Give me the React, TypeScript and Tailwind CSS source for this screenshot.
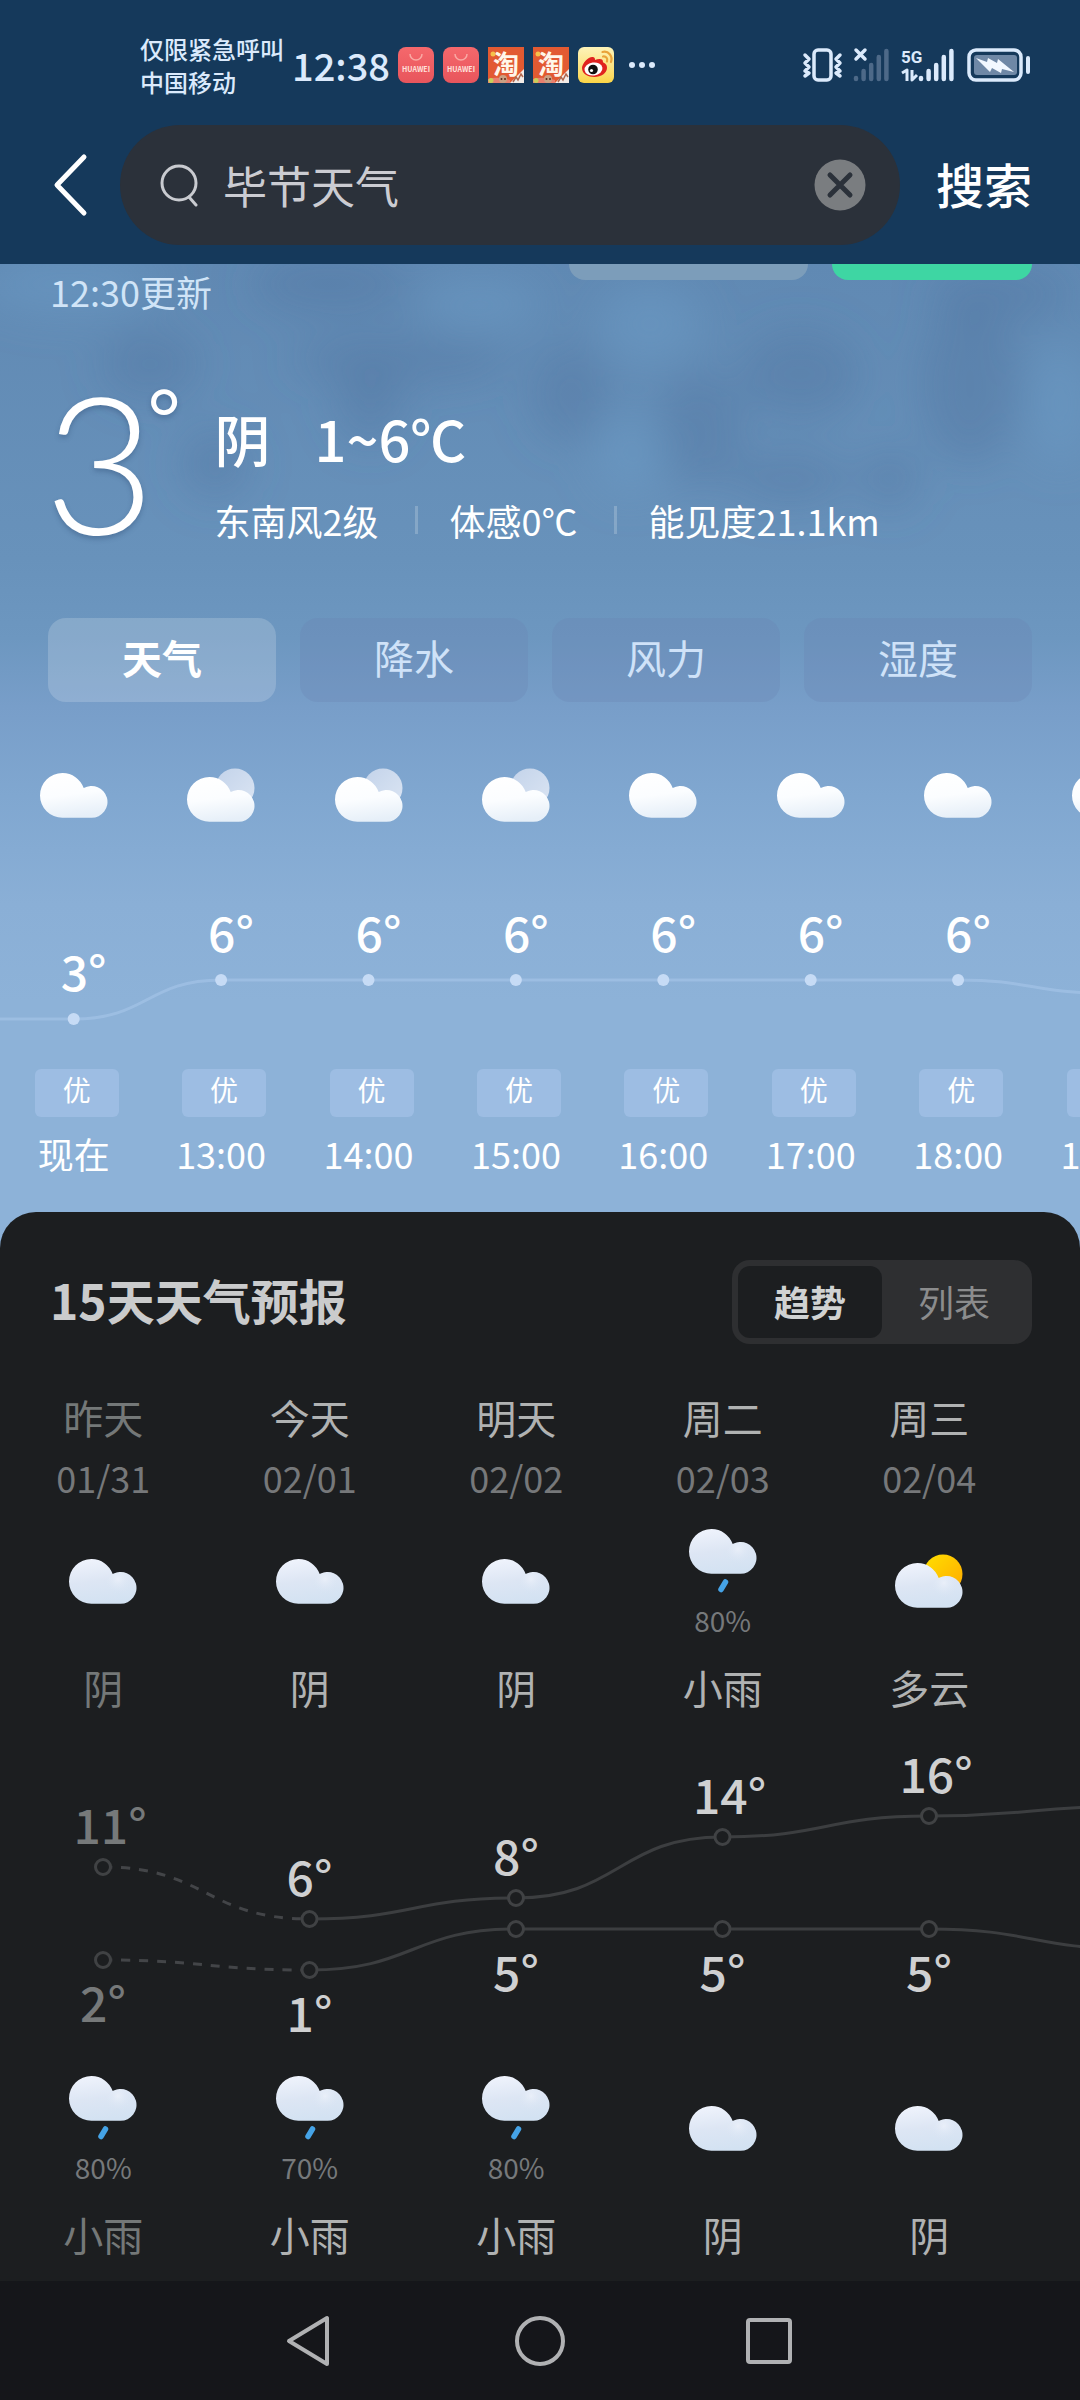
import { useId } from "react";

type Sky = "cloud" | "moon" | "sun" | "rain";

const HOURS: { time: string; sky: Sky; temp: number }[] = [
  { time: "现在", sky: "cloud", temp: 3 },
  { time: "13:00", sky: "moon", temp: 6 },
  { time: "14:00", sky: "moon", temp: 6 },
  { time: "15:00", sky: "moon", temp: 6 },
  { time: "16:00", sky: "cloud", temp: 6 },
  { time: "17:00", sky: "cloud", temp: 6 },
  { time: "18:00", sky: "cloud", temp: 6 },
  { time: "19:00", sky: "cloud", temp: 5 },
];

type Half = { sky: Sky; chance?: string; text: string };
type Day = { name: string; date: string; day: Half; night: Half; high: number; low: number };

const DAYS: Day[] = [
  { name: "昨天", date: "01/31", day: { sky: "cloud", text: "阴" }, night: { sky: "rain", chance: "80%", text: "小雨" }, high: 11, low: 2 },
  { name: "今天", date: "02/01", day: { sky: "cloud", text: "阴" }, night: { sky: "rain", chance: "70%", text: "小雨" }, high: 6, low: 1 },
  { name: "明天", date: "02/02", day: { sky: "cloud", text: "阴" }, night: { sky: "rain", chance: "80%", text: "小雨" }, high: 8, low: 5 },
  { name: "周二", date: "02/03", day: { sky: "rain", chance: "80%", text: "小雨" }, night: { sky: "cloud", text: "阴" }, high: 14, low: 5 },
  { name: "周三", date: "02/04", day: { sky: "sun", text: "多云" }, night: { sky: "cloud", text: "阴" }, high: 16, low: 5 },
];

function CloudShape({ fill, puff }: { fill: string; puff?: string }) {
  return (
    <>
      <path
        d="M22.4 0A22.4 22.4 0 0 1 43.7 15.1A15.9 15.9 0 1 1 51.6 44.8H22.4A22.4 22.4 0 0 1 22.4 0z"
        fill={fill}
      />
      {puff && <circle cx="51.6" cy="28.9" r="15.9" fill={puff} />}
    </>
  );
}

function SkyIcon({ sky, dim = false }: { sky: Sky; dim?: boolean }) {
  const id = useId();
  const body = `${id}body`;
  const orb = `${id}orb`;
  const puff = `${id}puff`;
  const height = sky === "rain" ? 65 : sky === "cloud" ? 45 : 54;
  const lift = sky === "moon" || sky === "sun" ? 9 : 0;
  return (
    <svg width="68" height={height} viewBox={`0 0 68 ${height}`} className="shrink-0" aria-hidden="true">
      <defs>
        <linearGradient id={body} gradientUnits="userSpaceOnUse" x1="20" y1="0" x2="26" y2="45">
          <stop offset="0" stopColor={dim ? "#eff3fc" : "#ffffff"} />
          <stop offset="0.5" stopColor={dim ? "#dde6f4" : "#fbfdff"} />
          <stop offset="1" stopColor={dim ? "#d3e2f2" : "#e6eff8"} />
        </linearGradient>
        <linearGradient id={orb} x1="0" y1="0" x2="1" y2="1">
          <stop offset="0" stopColor={sky === "sun" ? "#ffe000" : "#c3d3ea"} />
          <stop offset="1" stopColor={sky === "sun" ? "#ffa800" : "#dbe5f3"} />
        </linearGradient>
        <radialGradient id={puff} gradientUnits="userSpaceOnUse" cx="49" cy="20" r="15">
          <stop offset="0" stopColor="#eff3fb" stopOpacity="0.7" />
          <stop offset="1" stopColor="#d8e4f3" stopOpacity="0" />
        </radialGradient>
      </defs>
      {lift > 0 && <circle cx="48" cy="20" r="19.5" fill={`url(#${orb})`} />}
      <g transform={`translate(0 ${lift})`}>
        <CloudShape fill={`url(#${body})`} puff={dim ? `url(#${puff})` : undefined} />
      </g>
      {sky === "rain" && <path d="M36.5 53l-4.5 7.5" stroke="#45a3e6" strokeWidth="5.5" strokeLinecap="round" />}
    </svg>
  );
}

type Point = [number, number];

/* Horizontal-tangent spline through the points. */
function curve(points: Point[]) {
  return points.reduce((d, [x, y], i) => {
    if (i === 0) return `M${x} ${y}`;
    const [px, py] = points[i - 1];
    const mid = (px + x) / 2;
    return `${d}C${mid} ${py} ${mid} ${y} ${x} ${y}`;
  }, "");
}

function HourChart() {
  const pts: Point[] = HOURS.map((h, i) => [73.7 + i * 147.4, 138 - (h.temp - 3) * 13]);
  return (
    <svg viewBox="0 0 1080 160" className="mt-[58px] block w-full" role="img" aria-label="逐小时气温">
      <path d={curve([[0, 138], ...pts])} fill="none" stroke="#b4d0f2" strokeOpacity="0.4" strokeWidth="3" />
      {HOURS.slice(0, 7).map((h, i) => (
        <g key={h.time}>
          <circle cx={pts[i][0]} cy={pts[i][1]} r="6" fill="#c6dbf5" />
          <text x={pts[i][0] - 13} y={pts[i][1] - 28} fontSize="48" fontWeight="500" fill="#fff">
            {h.temp}°
          </text>
        </g>
      ))}
    </svg>
  );
}

function DayChart() {
  const x = (i: number) => 103 + i * 206.5;
  const y = (t: number) => Math.round(240.2 - t * 10.25);
  const lines = [
    { key: "high" as const, next: 17, offset: -23 },
    { key: "low" as const, next: 3, offset: 62 },
  ];
  return (
    <svg viewBox="0 0 1080 310" className="mt-[26px] block w-full" role="img" aria-label="15天气温趋势">
      {lines.map(({ key, next, offset }) => {
        const pts: Point[] = [...DAYS.map((d, i): Point => [x(i), y(d[key])]), [x(5), y(next)]];
        return (
          <g key={key}>
            <path d={curve(pts.slice(0, 2))} fill="none" stroke="#434548" strokeWidth="3" strokeDasharray="9 9" />
            <path d={curve(pts.slice(1))} fill="none" stroke="#3c3e40" strokeWidth="3" />
            {DAYS.map((d, i) => (
              <g key={d.date}>
                <circle cx={pts[i][0]} cy={pts[i][1]} r="7.5" fill="#1c1e20" stroke="#404244" strokeWidth="3" />
                <text
                  x={pts[i][0] + (d[key] > 9 ? 7 : 0)}
                  y={pts[i][1] + offset}
                  textAnchor="middle"
                  fontSize="48"
                  fontWeight="500"
                  fill={i === 0 ? "#76797a" : "#cfd0d1"}
                >
                  {d[key]}°
                </text>
              </g>
            ))}
          </g>
        );
      })}
    </svg>
  );
}

function HalfDay({ half, past }: { half: Half; past: boolean }) {
  return (
    <>
      <div className="flex h-[106px] flex-col items-center justify-center">
        <SkyIcon sky={half.sky} dim />
        {half.chance && <span className="mt-3 text-[28px] leading-7 text-[#76797b]">{half.chance}</span>}
      </div>
      <span className={`mt-[29px] mb-[3px] text-[40px] leading-12 ${past ? "text-[#747878]" : "text-[#b0b2b2]"}`}>
        {half.text}
      </span>
    </>
  );
}

function ShopIcon() {
  return (
    <span className="flex h-9 w-9 flex-col items-center rounded-lg bg-linear-to-b from-[#f5686c] to-[#e8555c]">
      <svg viewBox="0 0 36 16" className="h-4 w-9" aria-hidden="true">
        <path d="M12 7a6 6 0 0 0 12 0" fill="none" stroke="#f9a9a4" strokeWidth="1.5" />
      </svg>
      <span className="text-[7px] leading-3 font-bold text-[#ffe1dc]">HUAWEI</span>
    </span>
  );
}

function TaobaoIcon() {
  return (
    <span className="relative h-9 w-9 bg-[#e25a32] text-center text-[26px] leading-8 font-bold text-[#fff6ea]">
      淘
      <svg viewBox="0 0 36 36" className="absolute inset-0" aria-hidden="true">
        <circle cx="5" cy="7" r="2.5" fill="#f6c14b" />
        <path d="M36 22v14H22z" fill="#f3ece8" />
        <path d="M25 35l3-5 2 3 3-6 2 3" fill="none" stroke="#b0674e" strokeWidth="1.5" />
        <path d="M0 32q10-3 22 1v3H0z" fill="#e8806f" />
        <circle cx="15" cy="32" r="4" fill="#c9a184" />
        <circle cx="13.5" cy="32" r="1" fill="#5b2a1c" />
        <circle cx="17" cy="32" r="1" fill="#5b2a1c" />
        <circle cx="3" cy="33.5" r="2.5" fill="#c9cf5a" />
      </svg>
    </span>
  );
}

function WeiboIcon() {
  return (
    <svg viewBox="0 0 36 36" className="h-9 w-9 rounded-md bg-linear-to-b from-[#fdf3b8] to-[#fbd545]" aria-hidden="true">
      <path d="M4 21c0-5 7-12 11-11 2 .5 2 2 2 3 3-1 8-2 8 2 0 1 4 1 4 6 0 5-6 9-12.5 9S4 27 4 21z" fill="#e0231f" />
      <ellipse cx="15.5" cy="22" rx="9" ry="6.5" fill="#fff" transform="rotate(-8 15.5 22)" />
      <circle cx="15" cy="22.5" r="4.8" fill="#111" />
      <circle cx="13.5" cy="23.5" r="1.6" fill="#fff" />
      <path d="M25 9.5c3-.5 5 2 4 5M24.5 5c6-1.5 10.5 4 8.5 10" fill="none" stroke="#e9a33a" strokeWidth="2.2" strokeLinecap="round" />
    </svg>
  );
}

function SignalBars({ x, color }: { x: number; color: string }) {
  return (
    <g stroke={color} strokeWidth="4.5" strokeLinecap="round">
      {[1, 8, 14, 22, 28].map((h, i) => (
        <path key={h} d={`M${x + i * 7.6} ${31 - h}V31`} />
      ))}
    </g>
  );
}

function StatusBar() {
  return (
    <div className="flex items-center pr-12 pl-[140px] text-[#dbeafc]">
      <div className="text-[24px] leading-[33px] font-medium whitespace-nowrap">
        <p>仅限紧急呼叫</p>
        <p>中国移动</p>
      </div>
      <p className="ml-2 text-[38px] leading-[66px] font-medium">12:38</p>
      <div className="ml-2 flex gap-[9px]">
        <ShopIcon />
        <ShopIcon />
        <TaobaoIcon />
        <TaobaoIcon />
        <WeiboIcon />
      </div>
      <svg viewBox="0 0 28 8" className="ml-3.5 h-2 w-7" fill="currentColor" aria-hidden="true">
        <circle cx="4" cy="4" r="3" />
        <circle cx="14" cy="4" r="3" />
        <circle cx="24" cy="4" r="3" />
      </svg>
      <svg viewBox="0 0 230 34" className="ml-auto h-[34px] w-[230px] overflow-visible" fill="none" aria-label="信号与电量">
        <g stroke="#dbeafc" strokeWidth="3.5" strokeLinecap="round" strokeLinejoin="round">
          <rect x="12" y="2" width="17" height="30" rx="4" />
          <path d="M3 7l4 4-4 4 4 4-4 4 4 2-4 3M38 7l-4 4 4 4-4 4 4 4-4 2 4 3" />
        </g>
        <path d="M54 2l9 9M63 2l-9 9" stroke="#dbeafc" strokeWidth="3.5" strokeLinecap="round" />
        <SignalBars x={54} color="#4d6988" />
        <text x="99" y="15" fontSize="17" fontWeight="700" fill="#dbeafc" className="font-['Roboto',sans-serif]">
          5G
        </text>
        <path d="M100 25l5-3v11M110 22v10l5-5" stroke="#dbeafc" strokeWidth="3" strokeLinejoin="round" />
        <SignalBars x={119} color="#dbeafc" />
        <rect x="167" y="2" width="52" height="30" rx="7" stroke="#dbeafc" strokeWidth="3.5" />
        <rect x="172" y="7" width="43" height="20" rx="3" fill="#6f88a6" />
        <path d="M174 10l11 4 1-4 9 5 1-4 16 13-12-3-1 4-9-5-2 4z" fill="#f2f8ff" />
        <path d="M226 10v14" stroke="#dbeafc" strokeWidth="4" strokeLinecap="round" />
      </svg>
    </div>
  );
}

function SearchBar() {
  return (
    <form className="mt-[27px] flex items-center pr-12 pl-[52px]" onSubmit={(e) => e.preventDefault()}>
      <button type="button" aria-label="返回" className="mr-8">
        <svg viewBox="0 0 36 64" className="h-16 w-9" fill="none" stroke="#fff" strokeWidth="5" strokeLinecap="round" strokeLinejoin="round">
          <path d="M32 4L5 32l27 28" />
        </svg>
      </button>
      <label className="flex h-[120px] min-w-0 flex-1 items-center rounded-full bg-[#2b313a] pr-[34px] pl-10">
        <svg viewBox="0 0 40 44" className="h-11 w-10 shrink-0" fill="none" stroke="#c9cbd0" strokeWidth="3" strokeLinecap="round" aria-hidden="true">
          <circle cx="19" cy="20" r="17" />
          <path d="M29 34l7 8" />
        </svg>
        <input
          aria-label="搜索"
          defaultValue="毕节天气"
          className="ml-[23px] min-w-0 flex-1 bg-transparent text-[44px] leading-[60px] text-[#cbccd2] outline-none"
        />
        <button type="button" aria-label="清除" className="shrink-0">
          <svg viewBox="0 0 52 52" className="h-[52px] w-[52px]">
            <circle cx="26" cy="26" r="25.5" fill="#7a7d80" />
            <path d="M16 16l20 20M36 16L16 36" stroke="#2b313a" strokeWidth="5" strokeLinecap="round" />
          </svg>
        </button>
      </label>
      <button type="submit" className="ml-9 pb-1 text-[48px] leading-[60px] font-medium text-white">
        搜索
      </button>
    </form>
  );
}

function CloudHaze() {
  const id = useId();
  return (
    <svg viewBox="0 0 1080 400" className="absolute inset-x-0 top-0 w-full" aria-hidden="true">
      <filter id={id} x="-20%" y="-20%" width="140%" height="140%">
        <feGaussianBlur stdDeviation="20" />
      </filter>
      <g filter={`url(#${id})`}>
        <g fill="#4f709d" fillOpacity="0.32">
          <ellipse cx="330" cy="20" rx="80" ry="30" />
          <ellipse cx="150" cy="100" rx="50" ry="35" />
          <ellipse cx="400" cy="95" rx="110" ry="25" />
          <ellipse cx="370" cy="140" rx="35" ry="40" />
          <ellipse cx="570" cy="130" rx="40" ry="50" />
          <ellipse cx="700" cy="165" rx="45" ry="60" />
          <ellipse cx="800" cy="110" rx="60" ry="45" />
          <ellipse cx="970" cy="120" rx="50" ry="80" />
          <ellipse cx="1000" cy="30" rx="70" ry="25" />
          <ellipse cx="790" cy="215" rx="60" ry="28" />
          <ellipse cx="215" cy="200" rx="35" ry="35" />
          <ellipse cx="890" cy="215" rx="30" ry="30" />
        </g>
        <g fill="#6b9cc6" fillOpacity="0.5">
          <ellipse cx="70" cy="20" rx="90" ry="30" />
          <ellipse cx="650" cy="60" rx="50" ry="40" />
          <ellipse cx="480" cy="40" rx="60" ry="25" />
          <ellipse cx="1060" cy="140" rx="30" ry="60" />
          <ellipse cx="630" cy="190" rx="35" ry="40" />
        </g>
      </g>
    </svg>
  );
}

const TABS = ["天气", "降水", "风力", "湿度"];

export default function App() {
  return (
    <div className="min-h-screen overflow-hidden bg-[#15161a] font-['Noto_Sans_CJK_SC',sans-serif]">
      <header className="bg-[#15395b] pt-8 pb-[19px]">
        <StatusBar />
        <SearchBar />
      </header>

      <section className="relative overflow-hidden bg-[linear-gradient(to_bottom,#6089b3_0%,#6892bb_30%,#6d97c0_38%,#789ec9_45%,#80a7d0_54%,#8aafd6_65%,#8db2d8_75%)] pb-[76px] text-white">
        <CloudHaze />
        <div className="relative">
          <div className="flex items-start px-12">
            <p className="mt-[7px] ml-0.5 text-[36px] leading-10 text-[#d0e4f7]">12:30更新</p>
            <button type="button" aria-label="天气提醒" className="-mt-11 mr-6 ml-auto h-15 w-[239px] rounded-2xl bg-[#7c9dba]" />
            <button type="button" aria-label="订阅" className="-mt-11 h-15 w-[200px] rounded-2xl bg-[#3ed6a3]" />
          </div>

          <div className="mt-[75px] flex items-start px-11">
            <p className="flex font-['Lato',sans-serif] text-[192px] leading-[148px] font-light [text-shadow:0_3px_5px_rgba(40,70,110,0.35)]">
              3<span className="-ml-2 text-[80px] leading-[60px] font-normal">°</span>
            </p>
            <div className="mt-[22px] ml-[34px]">
              <p className="flex gap-11 text-[56px] leading-[60px] font-medium">
                <span>阴</span>
                <span>1~6℃</span>
              </p>
              <ul className="mt-8 flex items-center text-[36px] leading-10 whitespace-nowrap">
                <li>东南风2级</li>
                <li className="ml-9 flex items-center gap-8 before:h-7 before:w-[3px] before:bg-white/20">体感0℃</li>
                <li className="ml-9 flex items-center gap-8 before:h-7 before:w-[3px] before:bg-white/20">能见度21.1km</li>
              </ul>
            </div>
          </div>

          <div role="tablist" className="mt-[78px] grid grid-cols-4 gap-6 px-12">
            {TABS.map((tab, i) => (
              <button
                key={tab}
                type="button"
                role="tab"
                aria-selected={i === 0}
                className={`h-[84px] rounded-[18px] pb-1.5 text-[40px] leading-12 ${
                  i === 0 ? "bg-white/18 font-bold text-white" : "bg-[#6b86b4]/30 text-[#cfe2f8]"
                }`}
              >
                {tab}
              </button>
            ))}
          </div>

          <ul className="mt-[65px] flex">
            {HOURS.map((h) => (
              <li key={h.time} className="flex h-14 w-[13.65%] shrink-0 items-center justify-center">
                <SkyIcon sky={h.sky} />
              </li>
            ))}
          </ul>
          <HourChart />
          <ul className="mt-7 flex">
            {HOURS.map((h) => (
              <li key={h.time} className="flex w-[13.65%] shrink-0 flex-col items-center">
                <div className="pl-1.5">
                  <p className="w-[84px] rounded-md bg-[#9dbde3] pb-2 text-center text-[28px] leading-10">优</p>
                </div>
                <p className="mt-4 text-[36px] leading-10">{h.time}</p>
              </li>
            ))}
          </ul>
        </div>
      </section>

      <main className="relative -mt-[37px] rounded-t-[36px] bg-[#1c1e20] pt-12 pb-5">
        <div className="flex items-center justify-between pr-12 pl-[50px]">
          <h2 className="pb-1.5 text-[48px] leading-[60px] font-bold text-[#cacbcc]">15天天气预报</h2>
          <div className="flex h-[84px] w-[300px] rounded-[18px] bg-[#2e2f31] p-1.5 text-[36px] leading-10">
            <button type="button" aria-pressed="true" className="flex-1 rounded-xl bg-[#1c1e20] pb-0.5 font-bold text-[#d0d2d2]">
              趋势
            </button>
            <button type="button" aria-pressed="false" className="flex-1 pb-0.5 text-[#8b8c8d]">
              列表
            </button>
          </div>
        </div>

        <ul className="mt-[49px] flex">
          {DAYS.map((d, i) => (
            <li key={d.date} className="flex w-[19.12%] flex-col items-center">
              <span className={`text-[40px] leading-12 ${i === 0 ? "text-[#747878]" : "text-[#b0b2b2]"}`}>{d.name}</span>
              <span className="mt-4 mb-[31px] text-[36px] leading-10 text-[#76787a]">{d.date}</span>
              <HalfDay half={d.day} past={i === 0} />
            </li>
          ))}
        </ul>
        <DayChart />
        <ul className="mt-[25px] flex">
          {DAYS.map((d, i) => (
            <li key={d.date} className="flex w-[19.12%] flex-col items-center">
              <HalfDay half={d.night} past={i === 0} />
            </li>
          ))}
        </ul>
      </main>

      <nav className="flex items-center justify-center gap-[178px] bg-[#15161a] py-[34px]">
        <button type="button" aria-label="返回">
          <svg viewBox="0 0 52 52" className="h-[52px] w-[52px]" fill="none" stroke="#b0b1b3" strokeWidth="4" strokeLinejoin="round">
            <path d="M43 3v46L5 26z" />
          </svg>
        </button>
        <button type="button" aria-label="主屏幕">
          <svg viewBox="0 0 52 52" className="h-[52px] w-[52px]" fill="none" stroke="#b0b1b3" strokeWidth="4">
            <circle cx="26" cy="26" r="23" />
          </svg>
        </button>
        <button type="button" aria-label="最近任务">
          <svg viewBox="0 0 52 52" className="h-[52px] w-[52px]" fill="none" stroke="#b0b1b3" strokeWidth="4">
            <rect x="4" y="5" width="42" height="42" rx="2" />
          </svg>
        </button>
      </nav>
    </div>
  );
}
